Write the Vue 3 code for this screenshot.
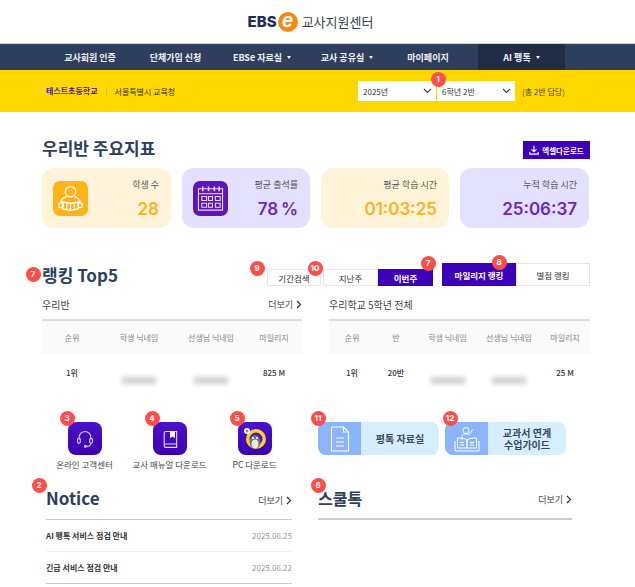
<template>
  <div class="page">
    <header class="top">
      <span class="logo-ebs">EBS</span>
      <span class="logo-e">e</span>
      <span class="logo-name">교사지원센터</span>
    </header>

    <nav class="nav">
      <a v-for="item in navItems" :key="item.label" class="nav-item" :class="{ 'nav-item--on': item.active }">
        {{ item.label }}<i v-if="item.caret" class="caret"></i>
      </a>
    </nav>

    <div class="school-bar">
      <strong class="school-name">테스트초등학교</strong>
      <span class="school-office">서울특별시 교육청</span>
      <div class="picker">
        <div v-for="p in pickers" :key="p" class="select">
          <span>{{ p }}</span>
          <svg width="9" height="6" viewBox="0 0 9 6" fill="none" stroke="#444" stroke-width="1.1"><path d="M1 1l3.5 3.5L8 1" /></svg>
        </div>
      </div>
      <span class="school-count">(총 2반 담당)</span>
    </div>

    <main class="main">
      <section>
        <div class="head-row">
          <h2 class="title">우리반 주요지표</h2>
          <button class="excel" type="button">
            <svg width="10" height="10" viewBox="0 0 12 12" fill="none" stroke="#fff" stroke-width="1.4"><path d="M6 1v7M3 5.2L6 8l3-2.8M1 8.5V11h10V8.5" /></svg>
            엑셀다운로드
          </button>
        </div>
        <div class="stats">
          <div v-for="s in stats" :key="s.label" class="stat" :class="'stat--' + s.tone">
            <div v-if="s.icon" class="stat-icon">
              <svg v-if="s.icon === 'student'" width="29" height="29" viewBox="0 0 30 30" fill="none" stroke="#fff" stroke-width="1.3">
                <circle cx="15" cy="8" r="5.4" />
                <path d="M5 20c0-4 3-6.500 6-6.800M25 20c0-4-3-6.500-6-6.800" />
                <path d="M7 18.500l8 1.600 8-1.600v7.300l-8 1.400-8-1.400z" />
                <path d="M15 20v7M11 19.500v7M19 19.500v7" />
                <circle cx="5" cy="22" r="2.400" />
                <circle cx="25" cy="22" r="2.400" />
              </svg>
              <svg v-else width="29" height="29" viewBox="0 0 30 30" fill="none" stroke="#e6dcff" stroke-width="1.1">
                <path d="M2.500 5h25v22h-25z" />
                <path d="M2.500 10h25" />
                <path d="M7 2.500v5M13 2.500v5M19 2.500v5M24 2.500v5" stroke-width="1.600" />
                <path d="M6 13h5v4H6zM13 13h4v4h-4zM20 13h5v4h-5zM6 20h5v4H6zM13 20h4v4h-4zM20 20h5v4h-5z" />
              </svg>
            </div>
            <div class="stat-text">
              <div class="stat-label">{{ s.label }}</div>
              <div class="stat-value">{{ s.value }}</div>
            </div>
          </div>
        </div>
      </section>

      <section>
        <div class="rank-head">
          <h2 class="title">랭킹 Top5</h2>
          <div class="rank-tabs">
            <button class="tab tab--search" type="button">기간검색</button>
            <button class="tab tab--week" type="button">지난주</button>
            <button class="tab tab--week tab--on" type="button">이번주</button>
          </div>
          <div class="rank-kinds">
            <button class="kind kind--on" type="button">마일리지 랭킹</button>
            <button class="kind" type="button">별점 랭킹</button>
          </div>
        </div>

        <div class="rank-grid">
          <div>
            <div class="table-label">
              <span>우리반</span>
              <a class="more">더보기 <svg class="chev" width="6" height="9" viewBox="0 0 6 9" fill="none" stroke="#333" stroke-width="1.2"><path d="M1 1l3.500 3.500L1 8" /></svg></a>
            </div>
            <div class="table table--class">
              <div v-for="h in classHead" :key="h" class="cell-h">{{ h }}</div>
              <div class="cell">1위</div>
              <div class="cell"><i class="blurred"></i></div>
              <div class="cell"><i class="blurred"></i></div>
              <div class="cell">825 M</div>
            </div>
          </div>
          <div>
            <div class="table-label">
              <span>우리학교 5학년 전체</span>
            </div>
            <div class="table table--school">
              <div v-for="h in schoolHead" :key="h.key" class="cell-h">{{ h.text }}</div>
              <div class="cell">1위</div>
              <div class="cell">20반</div>
              <div class="cell"><i class="blurred"></i></div>
              <div class="cell"><i class="blurred"></i></div>
              <div class="cell">25 M</div>
            </div>
          </div>
        </div>
      </section>

      <section class="quick">
        <div class="quick-links">
          <a class="quick-link">
            <span class="quick-icon">
              <svg width="20" height="20" viewBox="0 0 24 24" fill="none" stroke="#d9ceff" stroke-width="1.3">
                <path d="M5 13V10a7 7 0 0 1 14 0v3" />
                <rect x="3" y="11" width="3.400" height="6" rx="1.600" />
                <rect x="17.600" y="11" width="3.400" height="6" rx="1.600" />
                <path d="M19 17c0 2.600-2.500 3.800-5 3.800" />
                <circle cx="12.500" cy="20.800" r="1.200" />
              </svg>
            </span>
            <span>온라인 고객센터</span>
          </a>
          <a class="quick-link">
            <span class="quick-icon">
              <svg width="20" height="20" viewBox="0 0 24 24" fill="none" stroke="#e4dcff" stroke-width="1.3">
                <path d="M5 19V5a2 2 0 0 1 2-2h13v15H7a2 2 0 0 0 0 4h13v-4" />
                <path d="M12 3h6v8l-3-2-3 2z" fill="#fff" stroke="none" />
              </svg>
            </span>
            <span>교사 매뉴얼 다운로드</span>
          </a>
          <a class="quick-link">
            <span class="quick-icon">
              <svg width="26" height="26" viewBox="0 0 26 26">
                <circle cx="14" cy="13" r="10" fill="#ffd21f" />
                <circle cx="14" cy="13" r="6.500" fill="#4a12cc" />
                <ellipse cx="13" cy="16" rx="5.400" ry="7" fill="#6f7378" />
                <ellipse cx="13" cy="18" rx="3.400" ry="4.600" fill="#e8e8e8" />
                <circle cx="11" cy="12" r="1.100" fill="#fff" />
                <circle cx="15" cy="12" r="1.100" fill="#fff" />
                <circle cx="5" cy="5" r="3" fill="#fff" />
                <circle cx="5" cy="5" r="1.400" fill="#8f7be0" />
              </svg>
            </span>
            <span>PC 다운로드</span>
          </a>
        </div>
        <div class="banners">
          <a class="banner">
            <span class="banner-icon">
              <svg width="20" height="26" viewBox="0 0 20 26" fill="none" stroke="#fff" stroke-width="1.1">
                <path d="M1.500 1h12l5 5v19h-17z" />
                <path d="M13.500 1v5h5M6 12h8M6 16h8M6 20h8" />
              </svg>
            </span>
            <span class="banner-text">평톡 자료실</span>
          </a>
          <a class="banner">
            <span class="banner-icon">
              <svg width="26" height="26" viewBox="0 0 26 26" fill="none" stroke="#fff" stroke-width="1">
                <circle cx="12" cy="4.500" r="3" />
                <path d="M8 14v-3.500c0-1.600 1.400-2.600 4-2.600 1.600 0 2.600.3 3.200 1l3.300-5.400" />
                <path d="M3.500 12v10h9.500V14c-2-1.600-6-2-9.500-2zM22.500 12v10H13V14c2-1.600 6-2 9.500-2z" />
                <path d="M1 15v10h24V15" />
                <path d="M6 16.500h4M6 19h4M16 16.500h4M16 19h4" />
              </svg>
            </span>
            <span class="banner-text">교과서 연계<br />수업가이드</span>
          </a>
        </div>
      </section>

      <section class="bottom">
        <div>
          <div class="board-head">
            <h2 class="title">Notice</h2>
            <a class="more">더보기 <svg class="chev" width="6" height="9" viewBox="0 0 6 9" fill="none" stroke="#333" stroke-width="1.2"><path d="M1 1l3.500 3.500L1 8" /></svg></a>
          </div>
          <div v-for="n in notices" :key="n.title" class="notice">
            <span class="notice-title">{{ n.title }}</span>
            <span class="notice-date">{{ n.date }}</span>
          </div>
        </div>
        <div>
          <div class="board-head board-head--thick">
            <h2 class="title title--small">스쿨톡</h2>
            <a class="more">더보기 <svg class="chev" width="6" height="9" viewBox="0 0 6 9" fill="none" stroke="#333" stroke-width="1.2"><path d="M1 1l3.500 3.500L1 8" /></svg></a>
          </div>
        </div>
      </section>
    </main>

    <span
      v-for="b in badges"
      :key="b.n + '-' + b.x"
      class="badge"
      :style="{ left: b.x - 7.5 + 'px', top: b.y - 7.5 + 'px' }"
    >{{ b.n }}</span>
  </div>
</template>

<script setup>
const navItems = [
  { label: '교사회원 인증' },
  { label: '단체가입 신청' },
  { label: 'EBSe 자료실', caret: true },
  { label: '교사 공유실', caret: true },
  { label: '마이페이지' },
  { label: 'AI 펭톡', caret: true, active: true }
]

const pickers = ['2025년', '6학년 2반']

const stats = [
  { label: '학생 수', value: '28', tone: 'yellow', icon: 'student' },
  { label: '평균 출석률', value: '78\u2009%', tone: 'purple', icon: 'calendar' },
  { label: '평균 학습 시간', value: '01:03:25', tone: 'yellow' },
  { label: '누적 학습 시간', value: '25:06:37', tone: 'purple' }
]

const classHead = ['순위', '학생 닉네임', '선생님 닉네임', '마일리지']
const schoolHead = ['순위', '반', '학생 닉네임', '선생님 닉네임', '마일리지'].map((text, key) => ({ text, key }))

const notices = [
  { title: 'AI 펭톡 서비스 점검 안내', date: '2025.06.25' },
  { title: '긴급 서비스 점검 안내', date: '2025.06.22' }
]

const badges = [
  { n: 1, x: 438, y: 79 },
  { n: 7, x: 33, y: 274 },
  { n: 9, x: 257, y: 268 },
  { n: 10, x: 315, y: 268 },
  { n: 7, x: 428, y: 263 },
  { n: 8, x: 499, y: 262 },
  { n: 3, x: 67, y: 418 },
  { n: 4, x: 152, y: 418 },
  { n: 5, x: 237, y: 418 },
  { n: 11, x: 318, y: 418 },
  { n: 12, x: 450, y: 418 },
  { n: 2, x: 39, y: 485 },
  { n: 6, x: 318, y: 485 }
]
</script>

<style>
html, body {
  margin: 0;
  background: #fff;
}
</style>

<style scoped>
.page {
  position: relative;
  width: 635px;
  font-family: "Noto Sans CJK KR", "Noto Sans", sans-serif;
  color: #333;
}

.top {
  height: 44px;
  display: flex;
  align-items: center;
  justify-content: center;
  padding-right: 14px;
  box-sizing: border-box;
  border-bottom: 1px solid #cfd3da;
}

.logo-ebs {
  font-family: Inter, sans-serif;
  font-weight: 800;
  font-size: 15px;
  color: #1f2a5e;
}

.logo-e {
  width: 20px;
  height: 20px;
  margin: 0 4px 0 1px;
  border-radius: 50%;
  background: #f28a0e;
  color: #fff;
  font: italic 700 20px/17px "Liberation Sans", sans-serif;
  text-align: center;
}

.logo-name {
  font-size: 13px;
  color: #3a3f4a;
}

.nav {
  height: 26px;
  padding-left: 47px;
  display: grid;
  grid-template-columns: 86px 85px 88px 82px 80px 87px;
  background: #2e3f5e;
}

.nav-item {
  display: flex;
  align-items: center;
  justify-content: center;
  font-size: 9px;
  font-weight: 700;
  color: #eef0f5;
}

.nav-item--on {
  margin-left: 10px;
  width: 87px;
  background: #222d45;
}

.caret {
  margin-left: 5px;
  border-left: 2px solid transparent;
  border-right: 2px solid transparent;
  border-top: 3px solid #fff;
}

.school-bar {
  height: 42px;
  padding: 0 70px 0 46px;
  display: flex;
  align-items: center;
  background: #ffd800;
  font-size: 8px;
}

.school-name {
  padding-right: 8px;
  border-right: 1px solid #e6c200;
  color: #4b10b5;
  line-height: 10px;
}

.school-office {
  margin-left: 8px;
  color: #333;
}

.picker {
  margin-left: auto;
  display: flex;
  gap: 1px;
}

.select {
  width: 78px;
  height: 20px;
  padding: 0 4px 0 5px;
  box-sizing: border-box;
  display: flex;
  align-items: center;
  justify-content: space-between;
  background: #fff;
  color: #333;
}

.school-count {
  margin-left: 7px;
  width: 43px;
  white-space: nowrap;
  color: #444;
}

.main {
  padding: 0 45px 0 42px;
}

.head-row {
  margin-top: 25px;
  height: 22px;
  display: flex;
  align-items: flex-end;
  justify-content: space-between;
}

.title {
  margin: 0;
  font-size: 17px;
  line-height: 22px;
  font-weight: 700;
  color: #2e3f5e;
}

.title--small {
  font-size: 16px;
}

.excel {
  width: 67px;
  height: 18px;
  padding: 0;
  border: 0;
  display: flex;
  align-items: center;
  justify-content: center;
  gap: 3px;
  background: #3d00b8;
  color: #fff;
  font: 700 7.5px "Noto Sans CJK KR", sans-serif;
}

.stats {
  margin-top: 9px;
  display: grid;
  grid-template-columns: 129px 128px 128px 129px;
  column-gap: 11px;
}

.stat {
  height: 60px;
  padding: 0 12px 0 11px;
  box-sizing: border-box;
  display: flex;
  align-items: center;
  justify-content: space-between;
  border-radius: 12px;
}

.stat--yellow {
  background: #fff4d9;
  --tone: #ffb01f;
  --box: #ffb21a;
}

.stat--purple {
  background: #e4e0ff;
  --tone: #6a28c0;
  --box: #5f16b4;
}

.stat-icon {
  width: 35px;
  height: 35px;
  display: flex;
  align-items: center;
  justify-content: center;
  border-radius: 7px;
  background: var(--box);
}

.stat-text {
  margin-left: auto;
  text-align: right;
}

.stat-label {
  font-size: 9px;
  line-height: 14px;
  color: #555;
}

.stat-value {
  margin-top: 7px;
  font-family: Inter, sans-serif;
  font-size: 17px;
  line-height: 20px;
  font-weight: 600;
  color: var(--tone);
}

.rank-head {
  margin-top: 35px;
  height: 23px;
  display: flex;
  align-items: flex-end;
}

.rank-head .title {
  flex: 1;
  align-self: center;
}

.rank-tabs {
  display: flex;
  margin-right: 9px;
}

.tab,
.kind {
  padding: 0;
  box-sizing: border-box;
  font-family: "Noto Sans CJK KR", sans-serif;
  font-size: 8.5px;
  background: #fff;
  color: #333;
  border: 1px solid #e6e6ea;
}

.tab {
  height: 17px;
}

.tab--search {
  width: 54px;
  margin-right: 2px;
}

.tab--week {
  width: 55px;
}

.tab--on,
.kind--on {
  background: #3d00b8;
  border-color: #3d00b8;
  color: #fff;
  font-weight: 700;
}

.rank-kinds {
  display: flex;
}

.kind {
  width: 74px;
  height: 23px;
  border-width: 1.5px;
}

.rank-grid {
  margin-top: 10px;
  display: grid;
  grid-template-columns: 260px 261px;
  column-gap: 27px;
}

.table-label {
  height: 23px;
  padding-bottom: 7px;
  box-sizing: border-box;
  display: flex;
  align-items: center;
  justify-content: space-between;
  font-size: 10px;
  color: #444;
}

.more {
  display: flex;
  align-items: center;
  gap: 3px;
  font-size: 9px;
  color: #444;
}

.table {
  display: grid;
  border-top: 2px solid #ddd;
  grid-template-rows: 33px 36px;
}

.table--class {
  grid-template-columns: 60px 74px 70px 56px;
}

.table--school {
  grid-template-columns: 46px 42px 61px 62px 50px;
}

.cell-h,
.cell {
  display: flex;
  align-items: center;
  justify-content: center;
  white-space: nowrap;
  font-size: 8px;
}

.cell-h {
  background: #fafafa;
  color: #888;
}

.cell {
  font-weight: 500;
  color: #333;
}

.blurred {
  width: 34px;
  height: 7px;
  margin-top: 16px;
  background: #cfcfcf;
  filter: blur(2.5px);
}

.quick {
  margin-top: 32px;
  display: flex;
}

.quick-links {
  width: 276px;
  display: grid;
  grid-template-columns: repeat(3, 85px);
}

.quick-link {
  display: flex;
  flex-direction: column;
  align-items: center;
  gap: 2px;
  white-space: nowrap;
  font-size: 8.5px;
  line-height: 14px;
  color: #444;
}

.quick-icon {
  width: 34px;
  height: 33px;
  display: flex;
  align-items: center;
  justify-content: center;
  border-radius: 8px;
  background: linear-gradient(#4a12cc, #3c00ad);
}

.banners {
  display: flex;
  gap: 6px;
}

.banner {
  width: 121px;
  height: 33px;
  display: flex;
  overflow: hidden;
  border-radius: 8px;
  background: #d6efff;
}

.banner-icon {
  flex: 0 0 43px;
  display: flex;
  align-items: center;
  justify-content: center;
  background: #8ab4fb;
}

.banner-text {
  flex: 1;
  align-self: center;
  text-align: center;
  font-size: 10px;
  line-height: 12px;
  font-weight: 700;
  color: #3a4660;
}

.bottom {
  margin-top: 16px;
  padding-left: 4px;
  display: grid;
  grid-template-columns: 246px 254px;
  column-gap: 26px;
}

.board-head {
  height: 33px;
  padding-bottom: 10px;
  box-sizing: border-box;
  display: flex;
  align-items: center;
  justify-content: space-between;
  border-bottom: 1px solid #ccc;
}

.board-head--thick {
  border-bottom-width: 2px;
}

.board-head .more {
  margin-top: 4px;
}

.notice {
  height: 32px;
  box-sizing: border-box;
  display: flex;
  align-items: center;
  justify-content: space-between;
  border-bottom: 1px solid #f1f1f1;
  font-size: 8px;
}

.notice:last-child {
  border-bottom-color: #ccc;
}

.notice-title {
  font-weight: 700;
  color: #333;
}

.notice-date {
  color: #999;
}

.badge {
  position: absolute;
  width: 15px;
  height: 15px;
  display: flex;
  align-items: center;
  justify-content: center;
  border-radius: 50%;
  background: #ff4d4a;
  color: #fff;
  font: 700 8px Inter, sans-serif;
}
</style>
